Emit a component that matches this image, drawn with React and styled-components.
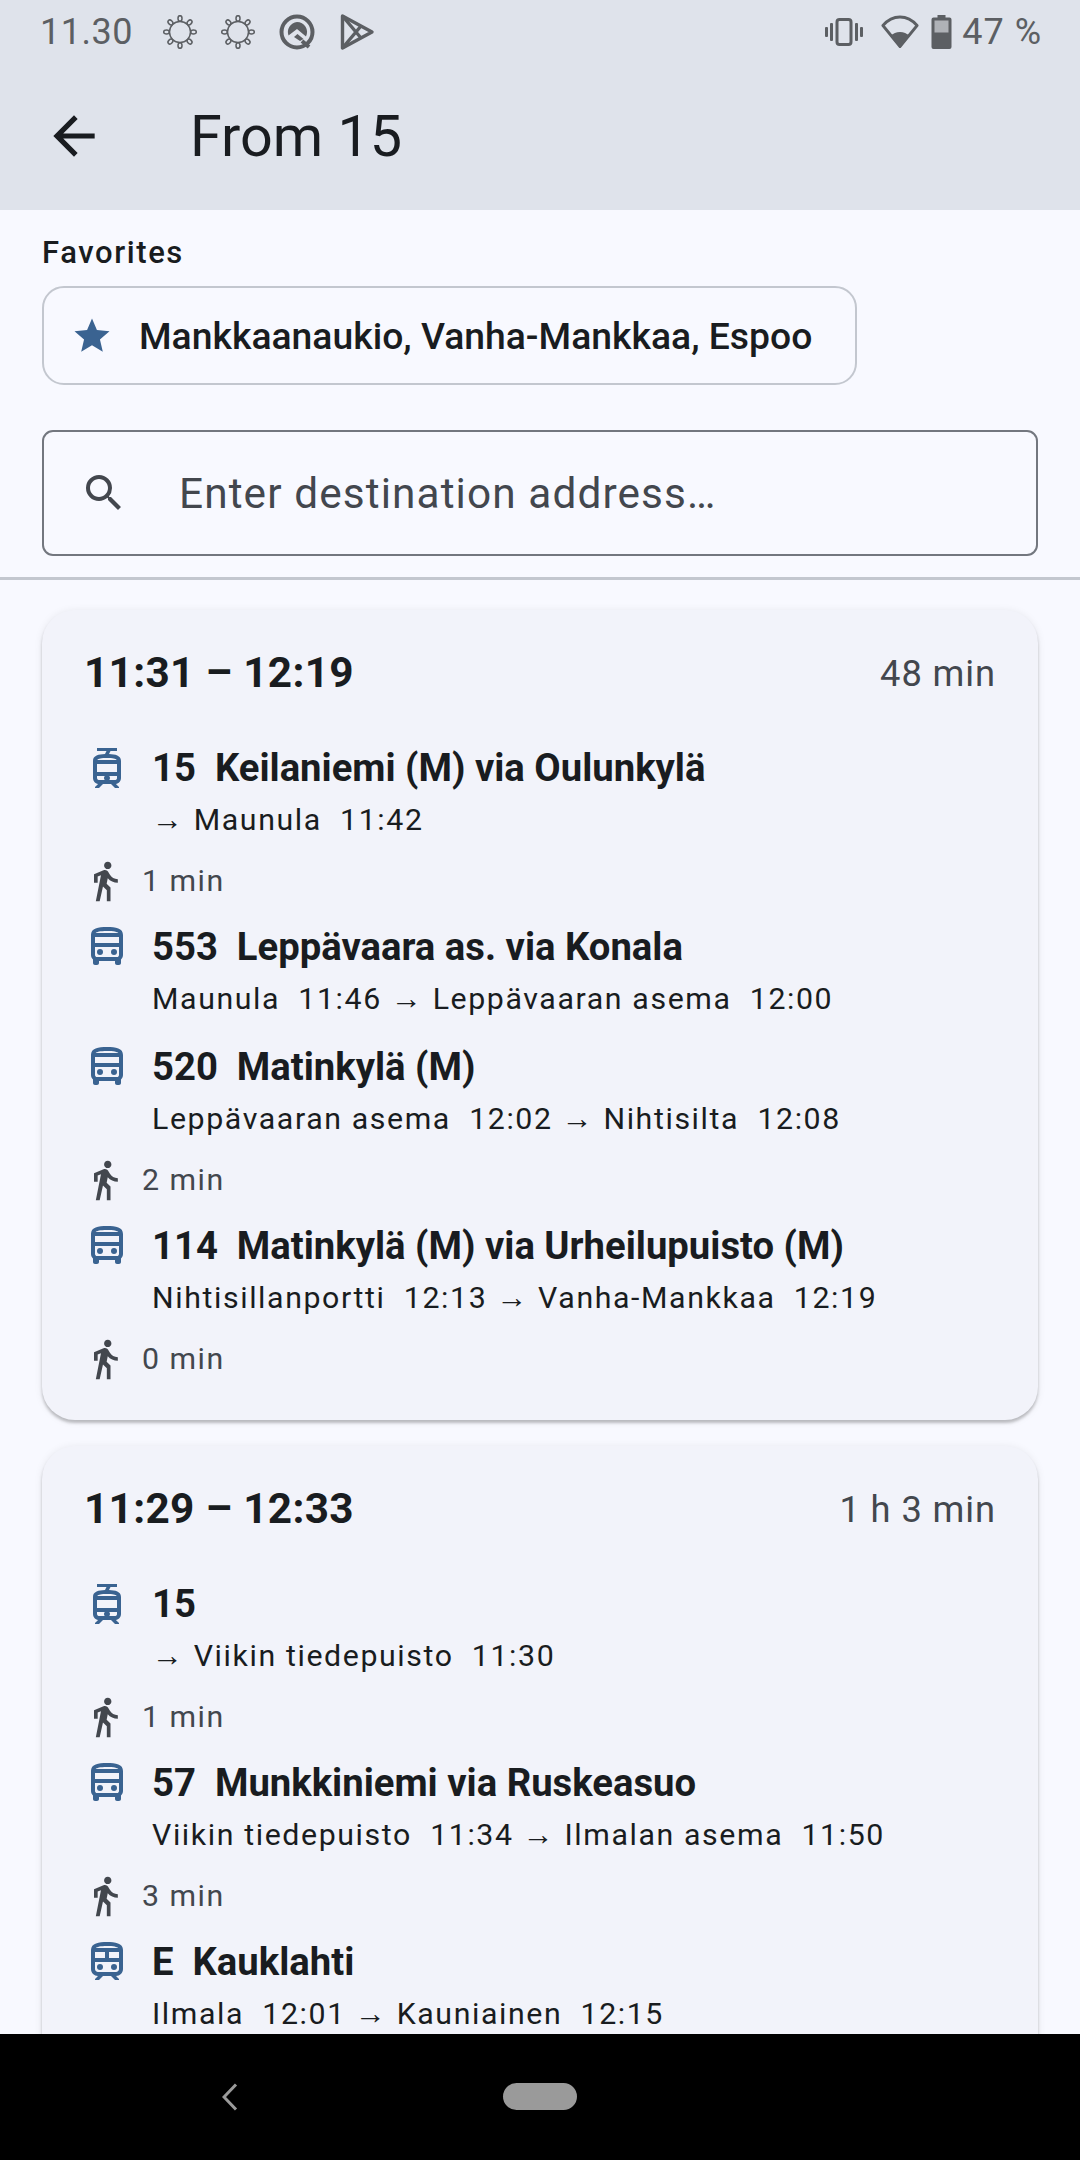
import React from "react";
import styled, { createGlobalStyle } from "styled-components";
import { MdArrowBack, MdStar, MdSearch, MdDirectionsWalk, MdOutlineDirectionsBus, MdOutlineTram, MdOutlineTrain } from "react-icons/md";

const Global = createGlobalStyle`
  html, body { margin: 0; padding: 0; background: #000; }
  * { box-sizing: border-box; }
`;

const Phone = styled.div`
  width: 1080px; height: 2160px; display: flex; flex-direction: column; overflow: hidden;
  font-family: Roboto, "Noto Sans", sans-serif; background: #f8f9ff; color: #191c20;
`;
const Header = styled.header`
  height: 210px; flex: none; background: #dfe3eb; display: flex; flex-direction: column;
`;
const StatusBar = styled.div`
  height: 64px; padding: 0 38px 0 40px; display: flex; align-items: center; color: #5c5f63; font-size: 36px;
`;
const Time = styled.span` width: 123px; letter-spacing: 0.5px; `;
const StatusLeft = styled.div` display: flex; align-items: center; gap: 24px; `;
const StatusRight = styled.div` margin-left: auto; display: flex; align-items: center; `;
const BatteryPct = styled.span` margin-left: 10px; letter-spacing: 1px; `;
const VibrateSlot = styled.span` display: flex; margin-right: 18px; `;
const WifiSlot = styled.span` display: flex; margin-right: 12px; `;
const AppBar = styled.div`
  flex: 1; display: flex; align-items: center; padding: 0 0 2px 43px; gap: 85px; font-size: 57.5px; color: #191c20;
`;
const Main = styled.main`
  flex: 1; min-height: 0; overflow: hidden; display: flex; flex-direction: column;
`;
const FavBlock = styled.section` padding: 23px 42px 0; flex: none; `;
const FavLabel = styled.div` font-size: 31px; font-weight: 500; letter-spacing: 1.6px; line-height: 40px; color: #191c20; `;
const Chip = styled.div`
  margin-top: 13px; width: 815px; height: 99px; border: 2.75px solid #c3c7cf; border-radius: 22px;
  display: flex; align-items: center; padding-left: 27px; gap: 26px; font-size: 37.3px; font-weight: 500; white-space: nowrap;
  color: #191c20;
`;
const SearchBox = styled.div`
  margin: 45px 42px 0; height: 126px; flex: none; border: 2.75px solid #73777f; border-radius: 11px;
  display: flex; align-items: center; padding-left: 36px; gap: 51px; font-size: 42.35px; letter-spacing: 1.1px; color: #43474e;
`;
const Divider = styled.hr` margin: 21px 0 0; border: 0; height: 2.75px; background: #c3c7cf; flex: none; `;
const List = styled.div` padding: 30px 42px 0; display: flex; flex-direction: column; gap: 26px; flex: none; `;
const Card = styled.article`
  background: #f2f3fa; border-radius: 33px; padding: 33px 42px 39px; flex: none;
  box-shadow: 0 3px 3px rgba(0,0,0,.22), 0 1px 8px rgba(0,0,0,.08);
`;
const CardHead = styled.div`
  display: flex; justify-content: space-between; align-items: center; height: 58px; margin-bottom: 39px;
`;
const Span = styled.div` margin-top: 2px; font-size: 42.35px; font-weight: 700; letter-spacing: 0.3px; `;
const Duration = styled.div` margin-top: 4px; font-size: 36.3px; letter-spacing: 0.9px; color: #43474e; `;
const Legs = styled.div` display: flex; flex-direction: column; gap: 16px; `;
const Leg = styled.div` display: flex; `;
const LegIcon = styled.div`
  width: 69px; flex: none; height: 56px; display: flex; align-items: center; color: #3a6391; margin-left: -1px;
`;
const LegBody = styled.div` display: flex; flex-direction: column; white-space: pre; `;
const LegName = styled.div` font-size: 38.25px; font-weight: 700; line-height: 56px; `;
const LegStops = styled.div` font-size: 30.3px; letter-spacing: 1.6px; line-height: 48px; `;
const Arrow = styled.span` font-size: 31px; line-height: 0; color: #191c20; `;
const Walk = styled.div`
  display: flex; align-items: center; height: 42px; margin-bottom: 1px; font-size: 30.3px; letter-spacing: 1.5px; color: #43474e;
`;
const WalkIcon = styled.div` width: 59px; margin-left: -1px; display: flex; color: #43474e; `;
const NavBar = styled.nav`
  height: 126px; flex: none; background: #000; display: flex; align-items: flex-start; padding: 49px 0 0 222px;
`;
const Pill = styled.div` width: 74px; height: 27px; border-radius: 14px; background: #9a9a9a; margin-left: 265px; `;

const Gear = () => (
  <svg width="34" height="34" viewBox="0 0 34 34" fill="none" stroke="#5c5f63" strokeWidth="1.5">
    <circle cx="17" cy="17" r="10.500" />
    {[0,45,90,135,180,225,270,315].map(a => (
      <ellipse key={a} cx="17" cy="3.500" rx="2" ry="2.800" transform={`rotate(${a} 17 17)`} />
    ))}
  </svg>
);
const QLogo = () => (
  <svg width="36" height="38" viewBox="0 0 36 38">
    <circle cx="18" cy="19" r="15.500" fill="none" stroke="#5c5f63" strokeWidth="4" />
    <path d="M18 9a10 10 0 0 1 9 14.500l-9-7.500-8.500 6.500A10 10 0 0 1 18 9z" fill="#5c5f63" />
    <path d="M15 24l3.500-3 6 5-3.500 2z" fill="#5c5f63" />
    <path d="M23 28l7 6" stroke="#5c5f63" strokeWidth="4" />
  </svg>
);
const PlayLogo = () => (
  <svg width="36" height="38" viewBox="0 0 36 38" fill="none" stroke="#5c5f63" strokeWidth="3.400" strokeLinejoin="round">
    <path d="M3.500 3 L33 19 L3.500 35 Z" />
    <path d="M3.500 3 L22 25 M3.500 35 L22 13" />
  </svg>
);
const Vibrate = () => (
  <svg width="38" height="28" viewBox="0 0 38 28" fill="#5c5f63">
    <rect x="0" y="9" width="3" height="10" rx="1" />
    <rect x="5" y="5" width="3" height="18" rx="1" />
    <rect x="30" y="5" width="3" height="18" rx="1" />
    <rect x="35" y="9" width="3" height="10" rx="1" />
    <rect x="12" y="1.500" width="14" height="25" rx="2.500" fill="none" stroke="#5c5f63" strokeWidth="3" />
  </svg>
);
const Wifi = () => (
  <svg width="38" height="34" viewBox="0 0 40 34" preserveAspectRatio="none">
    <path d="M20 31.500 2 10.500C7 5 13 2 20 2s13 3 18 8.500Z" fill="none" stroke="#5c5f63" strokeWidth="3" strokeLinejoin="round" />
    <path d="M20 33 10 21c3-2.500 6-4 10-4s7 1.500 10 4Z" fill="#5c5f63" />
  </svg>
);
const Battery = () => (
  <svg width="21" height="34" viewBox="0 0 20 34">
    <path d="M6 0h8v2.500h4a2 2 0 0 1 2 2V32a2 2 0 0 1-2 2H2a2 2 0 0 1-2-2V4.500a2 2 0 0 1 2-2h4Z" fill="#5c5f63" />
    <rect x="3" y="5.500" width="14" height="12" fill="#afb2b7" />
  </svg>
);

const icons = { bus: MdOutlineDirectionsBus, tram: MdOutlineTram, train: MdOutlineTrain };

const journeys = [
  {
    span: "11:31 – 12:19", duration: "48 min",
    legs: [
      { mode: "tram", name: "15  Keilaniemi (M) via Oulunkylä", from: "", to: "Maunula  11:42" },
      { walk: "1 min" },
      { mode: "bus", name: "553  Leppävaara as. via Konala", from: "Maunula  11:46 ", to: "Leppävaaran asema  12:00" },
      { mode: "bus", name: "520  Matinkylä (M)", from: "Leppävaaran asema  12:02 ", to: "Nihtisilta  12:08" },
      { walk: "2 min" },
      { mode: "bus", name: "114  Matinkylä (M) via Urheilupuisto (M)", from: "Nihtisillanportti  12:13 ", to: "Vanha-Mankkaa  12:19" },
      { walk: "0 min" },
    ],
  },
  {
    span: "11:29 – 12:33", duration: "1 h 3 min",
    legs: [
      { mode: "tram", name: "15", from: "", to: "Viikin tiedepuisto  11:30" },
      { walk: "1 min" },
      { mode: "bus", name: "57  Munkkiniemi via Ruskeasuo", from: "Viikin tiedepuisto  11:34 ", to: "Ilmalan asema  11:50" },
      { walk: "3 min" },
      { mode: "train", name: "E  Kauklahti", from: "Ilmala  12:01 ", to: "Kauniainen  12:15" },
    ],
  },
];

export default function App() {
  return (
    <Phone>
      <Global />
      <Header>
        <StatusBar>
          <Time>11.30</Time>
          <StatusLeft>
            <Gear /><Gear /><QLogo /><PlayLogo />
          </StatusLeft>
          <StatusRight>
            <VibrateSlot><Vibrate /></VibrateSlot>
            <WifiSlot><Wifi /></WifiSlot>
            <Battery />
            <BatteryPct>47 %</BatteryPct>
          </StatusRight>
        </StatusBar>
        <AppBar>
          <MdArrowBack size={62} />
          <span>From 15</span>
        </AppBar>
      </Header>
      <Main>
        <FavBlock>
          <FavLabel>Favorites</FavLabel>
          <Chip>
            <MdStar size={42} color="#3a6391" />
            <span>Mankkaanaukio, Vanha-Mankkaa, Espoo</span>
          </Chip>
        </FavBlock>
        <SearchBox>
          <MdSearch size={48} />
          <span>Enter destination address…</span>
        </SearchBox>
        <Divider />
        <List>
          {journeys.map(j => (
            <Card key={j.span}>
              <CardHead>
                <Span>{j.span}</Span>
                <Duration>{j.duration}</Duration>
              </CardHead>
              <Legs>
                {j.legs.map((l, i) => {
                  if (l.walk) return (
                    <Walk key={i}>
                      <WalkIcon><MdDirectionsWalk size={44} /></WalkIcon>
                      {l.walk}
                    </Walk>
                  );
                  const Icon = icons[l.mode];
                  return (
                    <Leg key={i}>
                      <LegIcon><Icon size={48} /></LegIcon>
                      <LegBody>
                        <LegName>{l.name}</LegName>
                        <LegStops>{l.from}<Arrow>→</Arrow> {l.to}</LegStops>
                      </LegBody>
                    </Leg>
                  );
                })}
              </Legs>
            </Card>
          ))}
        </List>
      </Main>
      <NavBar>
        <svg width="16" height="28" viewBox="0 0 16 28" fill="none" stroke="#9a9a9a" strokeWidth="3"><path d="M14 1.500 2 14l12 12.500" /></svg>
        <Pill />
      </NavBar>
    </Phone>
  );
}
